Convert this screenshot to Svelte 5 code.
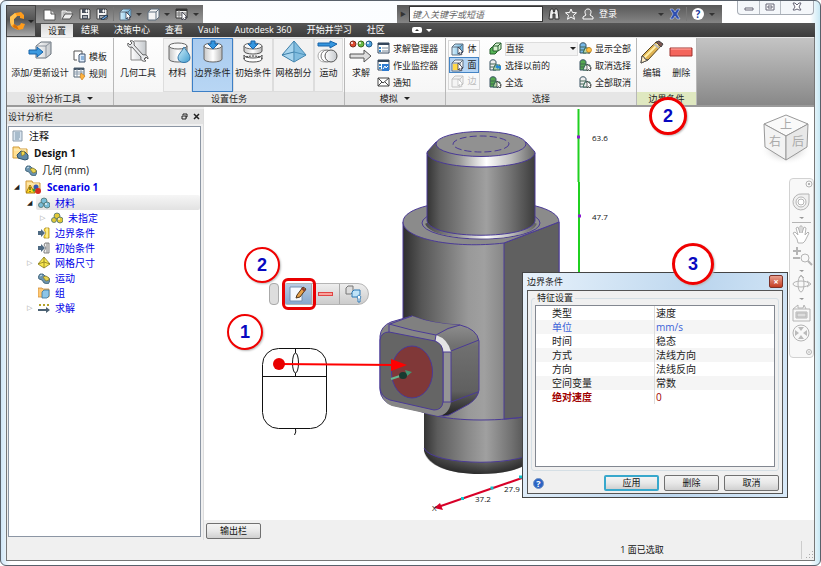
<script>
  const tabs = ['设置', '结果', '决策中心', '查看', 'Vault', 'Autodesk 360', '开始并学习', '社区'];
  let activeTab = $state('设置');

  const tasks = [
    { name: '材料', icon: 'material', width: 29 },
    { name: '边界条件', icon: 'boundary', width: 41 },
    { name: '初始条件', icon: 'initial', width: 40 },
    { name: '网格剖分', icon: 'mesh', width: 41 },
    { name: '运动', icon: 'motion', width: 29 },
  ];
  let activeTask = $state('边界条件');

  const modes = [
    { name: '体', icon: 'cube' },
    { name: '面', icon: 'face' },
    { name: '边', icon: 'edge', disabled: true },
  ];

  const tree = [
    { label: '注释', icon: 'note', level: 0, cls: 'top plain' },
    { label: 'Design 1', icon: 'design', level: 0, cls: 'top plain bold', big: true },
    { label: '几何 (mm)', icon: 'part', level: 1, cls: 'top plain' },
    { label: 'Scenario 1', icon: 'scenario', level: 1, cls: 'top bold', big: true, arrow: 'open' },
    { label: '材料', icon: 'balls', level: 2, arrow: 'open', cls: 'selected' },
    { label: '未指定', icon: 'ballsYellow', level: 3, arrow: 'closed' },
    { label: '边界条件', icon: 'bc', level: 2 },
    { label: '初始条件', icon: 'ic', level: 2 },
    { label: '网格尺寸', icon: 'meshSize', level: 2, arrow: 'closed' },
    { label: '运动', icon: 'part', level: 2 },
    { label: '组', icon: 'group', level: 2 },
    { label: '求解', icon: 'solveSmall', level: 2, arrow: 'closed' },
  ];

  const props = [
    { key: '类型', value: '速度' },
    { key: '单位', value: 'mm/s', cls: 'unit' },
    { key: '时间', value: '稳态' },
    { key: '方式', value: '法线方向' },
    { key: '方向', value: '法线反向' },
    { key: '空间变量', value: '常数' },
    { key: '绝对速度', value: '0', cls: 'required' },
  ];
</script>

{#snippet icon(name, w, h)}
  <svg class="icon" width={w} height={h} viewBox="0 0 {w} {h}" aria-hidden="true">
    {#if name === 'new'}
      <path d="M1 2h7l4 4v6H1z" fill="#fff" stroke="#555" /><path d="M8 2v4h4" fill="#ddd" stroke="#555" />
    {:else if name === 'open'}
      <path d="M1 11V3h4l1 1h4v2" fill="#bbb" stroke="#eee" /><path d="M1 11l3-5h8l-3 5z" fill="#eee" stroke="#555" />
    {:else if name === 'save' || name === 'saveAs'}
      <path d="M1 1h9l1 1v9H1z" fill="#f4f4f4" stroke="#444" /><path d="M3 1h6v4H3zM3 7h6v4H3z" fill="#48505c" /><path d="M7 2h1v2H7zM4 9h4" fill="#fff" stroke="#fff" />
      {#if name === 'saveAs'}<path d="M5 11l5-4 2 1-5 4z" fill="#6aa3e0" stroke="#234" />{/if}
    {:else if name === 'cube' || name === 'face' || name === 'box' || name === 'edge'}
      <path d="M1 4l3-3h8v8l-3 3H1z" fill={name === 'cube' ? 'url(#blueFill)' : '#f4f4f4'} stroke={name === 'edge' ? '#c4c4c4' : '#607080'} />
      <path d="M1 4h8v8M9 4l3-3" fill="none" stroke={name === 'edge' ? '#c4c4c4' : '#607080'} />
      {#if name === 'face'}<path d="M2 5h6v6H2z" fill="#ffd84a" />{/if}
      {#if name !== 'box'}<path d="M7 4v7l1.500-1.500 1 2.500 1.500-.5-1-2.500h2z" fill="#fff" stroke={name === 'edge' ? '#bbb' : '#223'} stroke-width=".7" />{/if}
    {:else if name === 'table'}
      <path d="M1 1h11v9H1z" fill="#eee" stroke="#333" /><path d="M1 2h11" stroke="#333" stroke-width="2" /><path d="M1 5h11M1 7h11M4 2v8" stroke="#777" /><path d="M7 4v8l1.500-1.500L10 12l1-1-1-2h2z" fill="#fff" stroke="#223" stroke-width=".7" />
    {:else if name === 'binoculars'}
      <path d="M2 3l1-2h2l.5 3h1L7 1h2l1 2 1 8H7V6H5v5H1z" fill="#eee" stroke="#333" />
    {:else if name === 'star'}
      <path d="M6 1l1.500 3.500 4 .3-3 2.500 1 4L6 9l-3.500 2.300 1-4-3-2.500 4-.3z" fill="#777" stroke="#fff" />
    {:else if name === 'user'}
      <path d="M4 7C2 4 3 1 6 1s4 3 2 6l3 2v2H1V9z" fill="#777" stroke="#fff" />
    {:else if name === 'exchange'}
      <path d="M1 1h3l2 3 2-3h3L8 6l3 5H8L6 8l-2 3H1l3-5z" fill="#2f4fb0" stroke="#dfe8ff" stroke-width=".5" />
    {:else if name === 'add'}
      <path d="M8 6l5-4h10v12l-5 4H8z" fill="url(#greyFill)" stroke="#69727c" /><path d="M8 6h10v12M18 6l5-4" fill="none" stroke="#8a929c" /><path d="M1 10h8V7l6 5-6 5v-3H1z" fill="#3c9ae0" stroke="#1763a8" />
    {:else if name === 'template'}
      <path d="M4 10H1V1h8v3" fill="#fff" stroke="#555" /><path d="M7 4h5v8H6V5z" fill="#dceafa" stroke="#3d516b" /><path d="M8 7h3M8 9h3" stroke="#3d7fc0" />
    {:else if name === 'rules'}
      <path d="M1 1h10v9H1z" fill="#fff" stroke="#567" /><path d="M1 2h10" stroke="#456" stroke-width="2" /><path d="M1 5h10M1 7h10M4 2v8M8 2v8" stroke="#89a" /><path d="M8 6l4 3-3 4-2-3z" fill="#ffb340" stroke="#c77814" stroke-width=".6" />
    {:else if name === 'tools'}
      <path d="M5 4l3-3h12v17l-3 2H5z" fill="url(#greyFill)" stroke="#888" /><path d="M2 3l2 2 2-2-2-2c3-1 5 1 4 4l9 10c3-1 5 1 5 4l-2-2-2 2 2 2c-3 1-6-1-5-4L6 7C3 8 1 6 2 3z" fill="#e8eaec" stroke="#555" stroke-width=".9" />
    {:else if name === 'material' || name === 'boundary' || name === 'initial'}
      {#if name === 'initial'}
        <path d="M4 6v5c0 4 18 4 18 0V6" fill="url(#cylinder)" stroke="#555" /><path d="M4 15c0 4 18 4 18 0v4c0 4-18 4-18 0z" fill="#fff" stroke="#555" /><path d="M4 19c0-4 18-4 18 0" fill="none" stroke="#333" stroke-dasharray="2 1" />
      {:else}
        <path d="M4 6v13c0 4 18 4 18 0V6" fill="url(#cylinder)" stroke="#666" />
      {/if}
      <ellipse cx="13" cy="6" rx="9" ry="3" fill="#f8f8f8" stroke="#666" />
      {#if name === 'material'}
        <path d="M19 7c3 5 6 7 6 11 0 6-12 6-12 0 0-4 4-6 6-11z" fill="url(#drop)" stroke="#3476a6" />
      {:else}
        <path d="M11 1h4v3h3l-5 5-5-5h3z" fill="#3596df" stroke="#1763a8" />
      {/if}
    {:else if name === 'mesh'}
      <path d="M13 1L1 15l12 7 12-7z" fill="#a9d5ee" stroke="#3e7fa8" /><path d="M13 1v21M1 15l12-3 12 3" fill="none" stroke="#3e7fa8" /><path d="M13 1v21l12-7z" fill="#5ba5cf" opacity=".5" />
    {:else if name === 'motion'}
      <path d="M2 3h12V1l7 3-7 4V6H2z" fill="#3596df" stroke="#1763a8" /><circle cx="8" cy="16" r="6" fill="#fff" stroke="#aaa" /><circle cx="11" cy="16" r="6" fill="#fff" stroke="#777" /><circle cx="15" cy="16" r="6" fill="url(#greyFill)" stroke="#555" />
    {:else if name === 'solve'}
      <circle cx="4" cy="4" r="3" fill="#e04a30" stroke="#753020" /><circle cx="12" cy="4" r="3" fill="#67ba47" stroke="#3d6a20" /><circle cx="20" cy="4" r="3" fill="#4a9edc" stroke="#245c88" /><circle cx="3" cy="3" r="1" fill="#fff" /><circle cx="11" cy="3" r="1" fill="#fff" /><circle cx="19" cy="3" r="1" fill="#fff" /><path d="M1 14h14v-4l7 6-7 6v-4H1z" fill="#ddd" stroke="#555" />
    {:else if name === 'manager' || name === 'monitor'}
      <path d="M1 1h11v10H1z" fill="#fff" stroke="#35475c" /><path d="M1 2h11" stroke="#35475c" stroke-width="2" /><path d="M2 5h2v2H2zM2 8h2v2H2z" fill="#3787c8" /><path d="M5 6h6M5 9h6" stroke="#789" />
      {#if name === 'monitor'}<path d="M5 5h7v7H5z" fill="#2e7bd0" /><path d="M6 10l2-3 1 2 2-2" fill="none" stroke="#fff" />{/if}
    {:else if name === 'mail'}
      <path d="M1 2h11v8H1z" fill="#fff" stroke="#444" /><path d="M1 2l5 5 6-5M1 10l4-4M12 10L8 6" fill="none" stroke="#444" />
    {:else if name === 'direct'}
      <path d="M1 7l2-2h5v5l-2 2H1z" fill="#55b455" stroke="#245d2b" /><path d="M4 4l3-3h5v6l-3 2H4z" fill="#d9f2d2" stroke="#245d2b" /><path d="M4 4h5v5M9 4l3-3" fill="none" stroke="#245d2b" />
    {:else if name === 'previous' || name === 'all' || name === 'invert' || name === 'showAll' || name === 'none'}
      <path d="M1 3c0-3 6-3 6 0v8H1z" fill={name === 'showAll' ? '#76b8e8' : name === 'all' || name === 'invert' ? '#53a84f' : '#eee'} stroke="#3a5564" /><path d="M1 5h6M1 8h6" stroke="#465" fill="none" /><path d="M6 6h5v5H4z" fill={name === 'none' || name === 'invert' ? '#eee' : '#b9d6a6'} stroke="#365" />
      {#if name === 'previous'}<path d="M12 11V7H9V5L6 8l3 2V9z" fill="#278ad5" />{/if}
      {#if name === 'showAll'}<circle cx="10" cy="8" r="2.500" fill="#ffc240" stroke="#b77715" stroke-width=".7" /><path d="M9 11h2" stroke="#666" />{/if}
      {#if name === 'all' || name === 'invert' || name === 'none'}<path d="M8 5v7l1.500-1.500L11 12l1-1-1-2h1.500z" fill="#fff" stroke="#222" stroke-width=".7" />{/if}
    {:else if name === 'pencil'}
      <path d="M2 16L16 2l5 4L8 20l-7 3z" fill="#dfb252" stroke="#54431f" /><path d="M4 18L18 4" stroke="#fff0a8" stroke-width="2" /><path d="M16 2l3-1 4 3-2 3z" fill="#7e5752" stroke="#444" /><path d="M14 4l5 4" stroke="#bbb" stroke-width="2" /><path d="M2 16l2 1 1 2 3 1-7 3z" fill="#ffedc6" stroke="#555" />
    {:else if name === 'minus'}
      <path d="M1 8h22v8H1z" fill="#f4655c" stroke="#9e332f" /><path d="M2 9h20" stroke="#ffb0a6" />
    {:else if name === 'note'}
      <path d="M1 1h9v10H1z" fill="#d8e4ef" stroke="#8b9baa" /><path d="M3 3h5M3 5h5M3 7h5M3 9h4" stroke="#7994a9" />
    {:else if name === 'design' || name === 'scenario'}
      <path d="M1 13V2h6l1 2h7v9z" fill="#ffdf91" stroke="#d19b3b" /><path d="M2 5h12" stroke="#fff0c0" />
      {#if name === 'design'}
        <path d="M5 10l4-4 4 1 3 3v4l-3 1-7-2z" fill="#6189a5" stroke="#2d536f" /><path d="M9 7l3-1 1 3-3 2z" fill="#f0d74d" stroke="#8b7622" stroke-width=".6" />
      {:else}
        <path d="M5 6l5 8H1z" fill="#ffda22" stroke="#a77a0b" /><path d="M5 8v3M5 12v1" stroke="#222" /><circle cx="11" cy="8" r="2.500" fill="#3858b0" /><circle cx="13" cy="12" r="3" fill="#d72c20" /><circle cx="9" cy="11" r="1.500" fill="#369b3a" />
      {/if}
    {:else if name === 'part'}
      <path d="M0 5l2-3 3 0 2 2 4 2 1 3-2 3-4-1-2-3-3-1z" fill="#6c93ad" stroke="#365a72" stroke-width=".8" /><path d="M5 5l3-1 3 2 0 2-3 1z" fill="#e8d452" stroke="#887a25" stroke-width=".7" /><path d="M2 4l2-1" stroke="#cfe4f0" />
    {:else if name === 'balls' || name === 'ballsYellow'}
      {@const fill = name === 'balls' ? '#79bdd8' : '#e2c936'}
      <circle cx="6" cy="4" r="3" {fill} stroke="#4e716f" stroke-width=".8" /><circle cx="3" cy="8" r="2.500" {fill} stroke="#4e716f" stroke-width=".8" /><circle cx="9" cy="8" r="3" {fill} stroke="#4e716f" stroke-width=".8" /><circle cx="8" cy="7" r="1" fill="#fff" opacity=".8" />
    {:else if name === 'bc' || name === 'ic'}
      <path d="M0 4h3V2l4 4-4 4V8H0z" fill="#4e6a83" /><path d="M7 1h4v10H6V9l2-3-2-3z" fill={name === 'bc' ? '#ffe24d' : '#eee'} stroke={name === 'bc' ? '#a88818' : '#666'} stroke-width=".8" /><path d="M9 1v10" stroke={name === 'bc' ? '#fff8c0' : '#888'} />
    {:else if name === 'meshSize'}
      <path d="M6 0l6 7-6 4-6-4z" fill="#f8e74f" stroke="#8a7c20" stroke-width=".8" /><path d="M6 0v11M0 7l6-2 6 2" fill="none" stroke="#8a7c20" stroke-width=".8" />
    {:else if name === 'group'}
      <path d="M0 10V1h4l1 1h6v8z" fill="#ffc873" stroke="#d1913d" stroke-width=".8" /><path d="M4 5l2-2h5v6l-2 2H4z" fill="#8cc5e8" stroke="#36729b" stroke-width=".8" />
    {:else if name === 'solveSmall'}
      <path d="M1 3h2M5 3h2M9 3h2" stroke="#b3a22b" stroke-width="2" /><path d="M0 7h8V5l4 3-4 3V9H0z" fill="#4c6273" />
    {:else if name === 'pageEdit'}
      <path d="M1 2h12v14H1z" fill="#f6faff" stroke="#7690b0" /><path d="M8 10l6-8 3 2-6 8-4 1z" fill="#e6a14a" stroke="#51371c" /><path d="M13 3l3 3" stroke="#8c3b2b" stroke-width="2" />
    {:else if name === 'bulb'}
      <path d="M1 3l2-2h5v6l-2 2H1z" fill="#ddd" stroke="#777" /><path d="M7 7l2-2h6v5l-2 2H7z" fill="#bfe3f8" stroke="#2c78b5" /><path d="M13 14c-3-5 5-5 2 0v3h-2z" fill="#fff" stroke="#2c78b5" />
    {/if}
  </svg>
{/snippet}

{#snippet caret()}<i class="caret"></i>{/snippet}

<svg class="defs" width="0" height="0" aria-hidden="true">
  <defs>
    <linearGradient id="greyFill"><stop offset="0" stop-color="#fff" /><stop offset="1" stop-color="#c4c8cc" /></linearGradient>
    <linearGradient id="blueFill"><stop offset="0" stop-color="#d8f0fc" /><stop offset="1" stop-color="#66b2e0" /></linearGradient>
    <linearGradient id="cylinder"><stop offset="0" stop-color="#c8c8c8" /><stop offset=".5" stop-color="#fff" /><stop offset="1" stop-color="#b8b8b8" /></linearGradient>
    <linearGradient id="drop" x2="1" y2="1"><stop offset="0" stop-color="#d4f1fb" /><stop offset="1" stop-color="#409dcf" /></linearGradient>
    <linearGradient id="steel"><stop offset="0" stop-color="#343434" /><stop offset=".12" stop-color="#5c5c5c" /><stop offset=".38" stop-color="#888" /><stop offset=".55" stop-color="#a0a0a0" /><stop offset=".78" stop-color="#707070" /><stop offset="1" stop-color="#3c3c3c" /></linearGradient>
    <linearGradient id="body"><stop offset="0" stop-color="#2e2e2e" /><stop offset=".12" stop-color="#565656" /><stop offset=".42" stop-color="#999" /><stop offset=".52" stop-color="#a0a0a0" /><stop offset=".68" stop-color="#808080" /><stop offset="1" stop-color="#606060" /></linearGradient>
    <linearGradient id="chamfer"><stop offset="0" stop-color="#4c4c4c" /><stop offset=".3" stop-color="#999" /><stop offset=".55" stop-color="#fff" /><stop offset=".78" stop-color="#bbb" /><stop offset="1" stop-color="#666" /></linearGradient>
    <linearGradient id="blockSide" x2="0" y2="1"><stop offset="0" stop-color="#9a9a9a" /><stop offset=".3" stop-color="#707070" /><stop offset=".75" stop-color="#606060" /><stop offset="1" stop-color="#222" /></linearGradient>
    <linearGradient id="base" x2="0" y2="1"><stop offset="0" stop-color="#000" stop-opacity="0" /><stop offset="1" stop-color="#000" stop-opacity=".7" /></linearGradient>
    <radialGradient id="cubeShadow"><stop offset="0" stop-color="#888" /><stop offset="1" stop-color="#fff" stop-opacity="0" /></radialGradient>
  </defs>
</svg>

<div class="window">
  <header>
    <button class="app-button" aria-label="应用程序菜单">
      <svg width="17" height="20" viewBox="0 0 17 20" aria-hidden="true">
        <path d="M6 2l6-1 3 3v4l-4-1V5L8 5 5 8v5l3 2 3-1 1-2 4 1-2 5-5 1-6-3-2-5V6z" fill="#ff9c1b" /><path d="M1 6l4 2v5l-3 2-1-5zM6 2l2 3-3 3-4-2z" fill="#ffc252" /><path d="M8 15l2 4-6-3 1-3z" fill="#d56e08" />
      </svg>
      {@render caret()}
    </button>
    <div class="title">
      <div class="quick">
        <button aria-label="新建">{@render icon('new', 13, 13)}</button>
        <button aria-label="打开">{@render icon('open', 13, 13)}</button>
        <button aria-label="保存">{@render icon('save', 12, 12)}</button>
        <button aria-label="另存为">{@render icon('saveAs', 12, 12)}</button>
        <i class="divider"></i>
        <button aria-label="选择">{@render icon('cube', 13, 13)}{@render caret()}</button>
        <button aria-label="显示">{@render icon('box', 13, 13)}{@render caret()}</button>
        <button aria-label="表格">{@render icon('table', 13, 13)}</button>
        {@render caret()}
      </div>
      <div class="search">
        <span class="expand">▶</span>
        <input aria-label="搜索" placeholder="键入关键字或短语" />
        <button aria-label="查找">{@render icon('binoculars', 12, 12)}</button>
        <button aria-label="收藏">{@render icon('star', 12, 12)}</button>
        <button class="login">{@render icon('user', 12, 12)} 登录 {@render caret()}</button>
        <button aria-label="Exchange">{@render icon('exchange', 12, 12)}</button>
        <i class="divider"></i>
        <button class="help" aria-label="帮助"><b>?</b>{@render caret()}</button>
      </div>
      <div class="window-buttons">
        <button aria-label="最小化"><svg width="10" height="10" viewBox="0 0 10 10"><path d="M1 6h8v2H1z" fill="#fff" stroke="#667" /></svg></button>
        <button aria-label="还原"><svg width="10" height="10" viewBox="0 0 10 10"><path d="M1 2h8v6H1z" fill="#fff" stroke="#667" /><path d="M3 4h4v2H3z" fill="none" stroke="#667" /></svg></button>
        <button aria-label="关闭"><svg width="10" height="10" viewBox="0 0 10 10"><path d="M1 1h2l2 2 2-2h2L7 5l2 3H7L5 7 3 8H1l2-3z" fill="#fff" stroke="#667" /></svg></button>
      </div>
    </div>
    <nav class="tabs">
      {#each tabs as tab}
        <button class:active={tab === activeTab} onclick={() => (activeTab = tab)}>{tab}</button>
      {/each}
      <button class="minimise" aria-label="最小化功能区">
        <svg width="10" height="6" viewBox="0 0 10 6"><rect width="10" height="6" rx="2" fill="#fff" /><path d="M3 4l2-2 2 2z" fill="#333" /></svg>
        {@render caret()}
      </button>
    </nav>
  </header>

  <div class="client">
    <div class="ribbon">
      <section class="panel design">
        <div class="panel-body">
          <button class="big">{@render icon('add', 24, 24)}<span>添加/更新设计</span></button>
          <div class="rows two">
            <button>{@render icon('template', 13, 13)}模板</button>
            <button>{@render icon('rules', 13, 13)}规则</button>
          </div>
        </div>
        <h2>设计分析工具 {@render caret()}</h2>
      </section>
      <section class="panel setup">
        <div class="panel-body">
          <button class="big geometry">{@render icon('tools', 24, 24)}<span>几何工具</span></button>
          {#each tasks as task}
            <button
              class="big task"
              class:on={task.name === activeTask}
              style="width: {task.width}px"
              onclick={() => (activeTask = task.name)}
            >
              {@render icon(task.icon, 26, 24)}<span>{task.name}</span>
            </button>
          {/each}
        </div>
        <h2>设置任务</h2>
      </section>
      <section class="panel simulate">
        <div class="panel-body">
          <button class="big">{@render icon('solve', 24, 24)}<span>求解</span></button>
          <div class="rows">
            <button>{@render icon('manager', 13, 13)}求解管理器</button>
            <button>{@render icon('monitor', 13, 13)}作业监控器</button>
            <button>{@render icon('mail', 13, 13)}通知</button>
          </div>
        </div>
        <h2>模拟 {@render caret()}</h2>
      </section>
      <section class="panel select">
        <div class="panel-body">
          <div class="modes">
            {#each modes as mode}
              <button class:on={mode.name === '面'} disabled={mode.disabled}>{@render icon(mode.icon, 13, 13)}{mode.name}</button>
            {/each}
          </div>
          <div class="rows wide">
            <label>
              {@render icon('direct', 13, 13)}
              <select aria-label="选择方式"><option>直接</option></select>
              {@render caret()}
            </label>
            <button>{@render icon('previous', 13, 13)}选择以前的</button>
            <button>{@render icon('all', 13, 13)}全选</button>
          </div>
          <div class="rows">
            <button>{@render icon('showAll', 13, 13)}显示全部</button>
            <button>{@render icon('invert', 13, 13)}取消选择</button>
            <button>{@render icon('none', 13, 13)}全部取消</button>
          </div>
        </div>
        <h2>选择</h2>
      </section>
      <section class="panel context">
        <div class="panel-body">
          <button class="big">{@render icon('pencil', 24, 24)}<span>编辑</span></button>
          <button class="big">{@render icon('minus', 24, 24)}<span>删除</span></button>
        </div>
        <h2>边界条件</h2>
      </section>
      <div class="filler"></div>
    </div>

    <main>
      <aside>
        <div class="side-title">
          <span>设计分析栏</span>
          <button aria-label="浮动"><svg width="7" height="7" viewBox="0 0 7 7"><path d="M2 2V1h4v3H5M1 3h4v3H1z" fill="none" stroke="#222" /></svg></button>
          <button aria-label="关闭"><svg width="7" height="7" viewBox="0 0 7 7"><path d="M1 1l5 5M6 1L1 6" stroke="#222" stroke-width="1.500" /></svg></button>
        </div>
        <ul class="tree">
          {#each tree as node}
            <li class="level-{node.level} {node.cls ?? ''}">
              <span class="arrow {node.arrow ?? ''}"></span>
              <span class="node">{@render icon(node.icon, node.big ? 17 : 12, node.big ? 16 : 12)}{node.label}</span>
            </li>
          {/each}
        </ul>
      </aside>

      <div class="work">
        <div class="canvas">
          <svg class="scene" width="610" height="413" viewBox="204 107 610 413" role="img" aria-label="阀体模型">
            <path d="M578.500 109v73M579 182v100" stroke="#20d020" stroke-width="2" />
            <path d="M577 135.500h3v3h-3zM578 214.500h3v3h-3z" fill="#8a18d0" />
            <text x="592" y="141">63.6</text>
            <text x="592" y="220">47.7</text>

            <g stroke="#4a3a96" stroke-width="1">
              <path d="M424 404v47c4 14 25 23 56 23s55-9 57-23v-47z" fill="url(#steel)" stroke="none" />
              <path d="M424 448c8 19 106 19 113 0v4c-4 14-25 22-57 22s-53-9-56-22z" fill="url(#base)" stroke="none" />
              <path d="M424 448c8 19 106 19 113 0" fill="none" />
              <path d="M403 222v175c6 16 40 23 78 23s66-6 78-14V222z" fill="url(#body)" />
              <path d="M504 243l55-21v187q-25 8-55 10z" fill="#606060" />
              <path d="M504 243c-50 6-101-4-101-21 0-29 156-29 156 0z" fill="#8b8b8b" />
              <ellipse cx="481" cy="223" rx="59" ry="16" fill="#8f8f8f" />
              <path d="M427 223c6 18 102 18 108 0" fill="none" stroke="url(#chamfer)" stroke-width="4" />
              <path d="M427 153v68c4 19 104 19 108 0v-68z" fill="url(#steel)" />
              <path d="M436 142l-9 10c0 20 108 20 108 0l-9-10z" fill="url(#chamfer)" />
              <ellipse cx="481" cy="144" rx="45" ry="12.500" fill="#919191" />
              <ellipse cx="481" cy="144" rx="28" ry="8" fill="none" stroke-dasharray="7 3" />
            </g>

            <g stroke="#4a3a96">
              <path d="M380 336q1-10 11-14l21-6q20 8 48 9 17 4 19 16v49q-1 8-10 14l-20 11q-5 2-11 0l-46-10q-11-4-12-15z" fill="url(#blockSide)" />
              <path d="M389 324l23-8q20 8 48 9l-24 10z" fill="#808080" stroke="none" />
              <path d="M381 336q1-9 10-12l45 11q13 4 15 17v50q-2 13-13 14l-46-10q-10-4-11-15z" fill="#868686" stroke="none" />
              <path d="M436 335q12 4 15 17h-8q-1-9-8-11z" fill="#e4e4e4" stroke="none" />
              <path d="M443 352h8v50h-8z" fill="#959595" />
              <path d="M380 340q1-8 9-8l46 9q8 3 8 12v49q-1 8-9 8l-44-10q-9-3-10-12z" fill="#656565" />
              <path d="M389 324q24 7 47 11M389 324v8M436 335l-1 6M451 351l28-11M451 402l27-10M436 335q12-8 24-10M390 324l22-8" fill="none" />
              <ellipse cx="412" cy="372" rx="20.500" ry="26" fill="#803838" />
            </g>
            <path d="M391 379l18-6" stroke="#68b890" stroke-width="2" /><path d="M405 370l7 2-5 4z" fill="#459370" /><ellipse cx="403" cy="375.500" rx="4" ry="3.500" fill="#173b30" />

            <path d="M438 507l84-29" stroke="#d80028" stroke-width="2" />
            <path d="M434 508l6-5 3 7z" fill="#d80028" />
            <path d="M519 475.500h3v3h-3zM490.500 486.500h3v3h-3zM461 497h3v3h-3z" fill="#10c4cc" />
            <text x="432" y="511">X</text>
            <text x="475" y="502">37.2</text>
            <text x="504" y="492">27.9</text>

            <rect x="262.500" y="348.500" width="64" height="80" rx="16" fill="#fff" stroke="#111" />
            <path d="M262 376.500h65M295.500 348v6M295.500 372v4M295.500 429q1 3-1 6" fill="none" stroke="#111" />
            <ellipse cx="295.500" cy="363" rx="3" ry="10" fill="#fff" stroke="#111" />
            <path d="M279 364l116 1" stroke="#f00" stroke-width="2" /><circle cx="279" cy="364" r="6" fill="#e80000" /><path d="M391 359l16 6-16 6z" fill="#f00" />

            <ellipse cx="786" cy="149" rx="26" ry="16" fill="url(#cubeShadow)" />
            <g stroke="#999" stroke-width="1" stroke-linejoin="round">
              <path d="M786 115l22 9-22 12-22-12z" fill="#fafafa" /><path d="M764 124l22 12v24l-21-13z" fill="#f3f3f3" /><path d="M808 124l-22 12v24l21-13z" fill="#e8e8e8" />
            </g>
            <g class="cube-text"><text x="780" y="129">上</text><text x="769" y="146">右</text><text x="792" y="146">后</text></g>
          </svg>

          <div class="mini">
            <span class="grip"></span>
            <div class="mini-bar">
              <button class="on" aria-label="编辑">{@render icon('pageEdit', 18, 18)}</button>
              <button aria-label="删除"><span class="dash"></span></button>
              <button aria-label="可见性">{@render icon('bulb', 18, 18)}</button>
            </div>
            <span class="highlight"></span>
          </div>

          <div class="nav-bar">
            <svg width="23" height="178" viewBox="1 0 23 178" fill="none" stroke="#b4b4b4" role="img" aria-label="导航栏">
              <circle cx="20" cy="5" r="3" /><path d="M19 4l2 2M21 4l-2 2" />
              <path d="M13 15h7v8a8 8 0 1 1-7-8z" fill="#f0f0f0" /><circle cx="12" cy="23" r="5" fill="#fff" /><circle cx="12" cy="23" r="3" />
              <path d="M10 38h5l-2 2z" fill="#999" stroke="none" /><path d="M3 43.500h19" />
              <path d="M8 60l-4-6 2-1 3 3-2-7 2-1 2 6V47h2v7l2-6 2 1-1 7 3-3 1 1-4 8-2 2H9z" fill="#fff" />
              <path d="M8 68v8M4 72h8M4 79h7" stroke-width="2" /><circle cx="16" cy="79" r="4" /><path d="M19 82l4 4" stroke-width="2" />
              <path d="M10 91h5l-2 2z" fill="#999" stroke="none" />
              <ellipse cx="12" cy="105" rx="3" ry="8" /><ellipse cx="12" cy="105" rx="8" ry="3" /><path d="M10 99l2-3 3 3M18 102l4 3-4 3" />
              <path d="M10 119h5l-2 2z" fill="#999" stroke="none" />
              <path d="M4 130h17v12H4zM7 133h11v6H7zM4 130l5-4v3h5l1-3 2 4" /><path d="M8 134h9v4H8z" fill="#ddd" />
              <circle cx="12" cy="154" r="8" /><path d="M12 152l-3-4h6zM12 156l-3 4h6zM10 154l-4-3v6zM14 154l4-3v6z" fill="#bbb" stroke="none" />
              <circle cx="20" cy="173" r="2.500" /><path d="M19 173h2" />
            </svg>
          </div>

          <div class="dialog" role="dialog" aria-label="边界条件">
            <div class="dialog-title"><span>边界条件</span><button aria-label="关闭">×</button></div>
            <div class="dialog-body">
              <fieldset>
                <legend>特征设置</legend>
                <div class="grid">
                  <table>
                    <tbody>
                      {#each props as prop}
                        <tr class={prop.cls}><th scope="row">{prop.key}</th><td>{prop.value}</td></tr>
                      {/each}
                    </tbody>
                  </table>
                </div>
              </fieldset>
              <div class="actions">
                <button class="dialog-help" aria-label="帮助">?</button>
                <button class="command primary">应用</button>
                <button class="command">删除</button>
                <button class="command">取消</button>
              </div>
            </div>
          </div>
        </div>
        <div class="output"><button class="command">输出栏</button></div>
      </div>
    </main>
    <footer>
      <span>1 面已选取</span>
      <i class="divider"></i>
      <svg width="8" height="8" viewBox="0 0 8 8" aria-hidden="true"><path d="M6 0h1v1H6zM3 3h1v1H3zM6 3h1v1H6zM0 6h1v1H0zM3 6h1v1H3zM6 6h1v1H6z" fill="#aaa" /></svg>
    </footer>
  </div>

  <span class="callout ribbon-step">2</span>
  <span class="callout edit-step">2</span>
  <span class="callout pick-step">1</span>
  <span class="callout dialog-step">3</span>
</div>

<style>
  :global(body) {
    background: #fff;
  }

  .window {
    position: relative;
    box-sizing: border-box;
    min-height: 100vh;
    display: flex;
    flex-direction: column;
    padding: 4px 5px;
    border: 1px solid #59616b;
    border-radius: 6px;
    background: linear-gradient(90deg, #cfe6f7, #fff 10px, #fbfdff 50%, #fff calc(100% - 10px), #c8e8f4);
    color: #222;
    font: 9px/12px "Open Sans", "Noto Sans CJK SC", sans-serif;
    overflow: hidden;
  }

  button, input, select {
    box-sizing: border-box;
    margin: 0;
    padding: 0;
    border: 0;
    background: none;
    color: inherit;
    font: inherit;
    white-space: nowrap;
  }

  button {
    display: flex;
    align-items: center;
    justify-content: center;
  }

  h2, ul { margin: 0; padding: 0; }
  .defs { position: absolute; }
  .icon { flex: none; }

  .caret {
    display: inline-block;
    flex: none;
    border: 3px solid transparent;
    border-top-color: currentColor;
    border-bottom: 0;
  }

  .divider { width: 1px; height: 14px; background: #777; }

  /* title bar */
  header {
    display: grid;
    grid-template: 18px 14px / 30px 1fr;
  }

  .app-button {
    grid-row: 1 / 3;
    gap: 2px;
    border: 1px solid #444;
    background: linear-gradient(#777, #555 45%, #aaa);
    color: #222;
  }

  .title {
    display: flex;
    align-items: flex-start;
  }

  .quick, .search {
    display: flex;
    align-items: center;
    height: 18px;
    background: linear-gradient(#6b6b6b, #989898);
    color: #333;
  }

  .quick {
    box-sizing: border-box;
    width: 167px;
    padding-left: 7px;
    gap: 5px;
  }

  .quick button { gap: 4px; }

  .search {
    width: 325px;
    margin-left: auto;
    gap: 5px;
    background: linear-gradient(#585858, #858585);
  }

  .expand { width: 6px; margin-left: 3px; font-size: 6px; }

  .search input {
    width: 134px;
    height: 16px;
    padding: 0 2px;
    margin-left: -2px;
    border: 1px solid #333;
    background: #fff;
    font-style: italic;
  }

  .search input::placeholder { color: #666; }
  .login { width: 82px; gap: 5px; color: #fff; justify-content: flex-start; }
  .login .caret { margin-left: auto; color: #333; }
  .help { gap: 5px; }

  .help b {
    width: 12px;
    border-radius: 6px;
    background: #fff;
    color: #1a3aa0;
    font-size: 10px;
  }

  .window-buttons {
    display: flex;
    height: 14px;
    margin: -5px 1px 0 15px;
    border: 1px solid #a6acb4;
    border-top: 0;
    border-radius: 0 0 4px 4px;
    background: #f4f7fa;
  }

  .window-buttons button { width: 21px; }
  .window-buttons button + button { border-left: 1px solid #b5bbc2; }
  .window-buttons button:last-child { width: 33px; }

  .tabs {
    display: flex;
    gap: 1px;
    padding: 0 5px;
    background: linear-gradient(#555, #3c3c3c);
    color: #fff;
  }

  .tabs button { padding: 0 7px; }

  .tabs .active {
    margin-top: 1px;
    background: linear-gradient(#d8d8d8, #f4f4f4);
    color: #222;
  }

  .tabs .minimise { gap: 4px; margin-left: 12px; }

  /* ribbon */
  .client {
    flex: 1;
    display: flex;
    flex-direction: column;
    border: 1px solid #777;
    border-top: 0;
    background: #f0f0f0;
  }

  .ribbon {
    display: flex;
    height: 67px;
    padding-top: 1px;
    border-bottom: 2px solid #9a9a9a;
    background: #e6e6e6;
  }

  .panel {
    flex: none;
    display: flex;
    flex-direction: column;
    border-right: 1px solid #b8b8b8;
    background: #fbfbfb;
  }

  .design { width: 106px; }
  .setup { width: 230px; }
  .simulate { width: 100px; }
  .select { width: 190px; }
  .context { width: 59px; }
  .filler { flex: 1; background: linear-gradient(#c4c4c4, #888); }

  .panel-body {
    flex: 1;
    display: flex;
    align-items: stretch;
    background: linear-gradient(#fefefe, #f6f6f6);
  }

  h2 {
    height: 13px;
    background: #e6e6e6;
    font-size: 9px;
    font-weight: 400;
    line-height: 13px;
    text-align: center;
  }

  h2 .caret { margin: 0 0 2px 4px; }
  .context h2 { background: #dfe8c0; }

  .big {
    flex-direction: column;
    justify-content: flex-start;
    gap: 3px;
    padding-top: 2px;
  }

  .design .big { width: 64px; }
  .design .big, .design .rows { padding-left: 2px; }
  .geometry { width: 44px; margin: 0 3px 0 2px; }
  .task { border: 1px solid #ddd; background: #f2f2f2; padding-top: 1px; }
  .task.on { border-color: #3c7fc6; background: linear-gradient(#a9cbef, #b8d6f4); }
  .simulate .big { width: 32px; }
  .context .big { flex: 1; }

  .rows {
    display: flex;
    flex-direction: column;
    padding-top: 2px;
  }

  .rows button, .rows label {
    display: flex;
    align-items: center;
    justify-content: flex-start;
    gap: 3px;
    height: 17px;
  }

  .rows.two { padding-top: 10px; }
  .rows.wide { width: 90px; padding-left: 9px; }
  .rows.wide label { position: relative; }

  .rows select {
    width: 73px;
    height: 14px;
    padding-left: 0;
    border: 1px solid #ddd;
    background: #f3f3f3;
    appearance: none;
  }

  .rows label .caret { position: absolute; right: 3px; }

  .modes {
    width: 30px;
    margin: 2px 0 2px 2px;
    border: 1px solid #d8d8d8;
  }

  .modes button { width: 100%; height: 16px; gap: 3px; }
  .modes .on { border: 1px solid #4484c4; background: #b4d4f4; }
  .modes button:disabled { color: #bbb; }

  /* side panel */
  main { flex: 1; display: flex; }

  aside {
    width: 196px;
    display: flex;
    flex-direction: column;
    margin-top: 2px;
    border-right: 1px solid #ddd;
  }

  .side-title {
    display: flex;
    align-items: center;
    gap: 5px;
    height: 15px;
    padding-right: 3px;
    background: #e2e2e2;
  }

  .side-title span { flex: 1; padding-left: 1px; }

  .tree {
    flex: 1;
    margin: 2px 2px 3px 1px;
    border: 1px solid #8c96a4;
    background: #fff;
    color: #0000e8;
    font-size: 10px;
    list-style: none;
  }

  .tree li { display: flex; align-items: center; height: 15px; white-space: nowrap; }
  .tree .top { height: 17px; }
  .tree .plain { color: #111; }
  .tree .bold { font-weight: 700; }
  .node { flex: 1; display: flex; align-items: center; gap: 5px; height: 100%; }
  .selected .node { margin-left: -2px; padding-left: 2px; border-radius: 2px; background: linear-gradient(#f6f6f6, #e2e2e2); }
  .level-0 .node { margin-left: -11px; }
  .level-0 { padding-left: 3px; }
  .level-1 { padding-left: 5px; }
  .level-2 { padding-left: 18px; }
  .level-3 { padding-left: 31px; }
  .arrow { box-sizing: border-box; width: 11px; flex: none; }
  .arrow.open::before, .arrow.closed::before { content: "▷"; display: block; color: #999; font: 7px/10px "DejaVu Sans", sans-serif; }
  .arrow.open::before { content: "◢"; color: #222; }

  /* work area */
  .work { flex: 1; min-width: 0; display: flex; flex-direction: column; }
  .canvas { position: relative; flex: 1; min-height: 412px; overflow: hidden; background: #fff; }
  .scene { display: block; }
  .scene text { fill: #111; font-size: 8px; }
  .scene .cube-text text { fill: #aaa; font-size: 12px; }

  .mini {
    position: absolute;
    left: 65px;
    top: 176px;
    display: flex;
    gap: 4px;
    height: 22px;
  }

  .grip { width: 8px; border: 1px solid #aaa; border-radius: 4px; background: #ddd; }
  .mini-bar { display: flex; border: 1px solid #b5b5b5; border-radius: 4px 11px 11px 4px; background: linear-gradient(#eee, #ccc); overflow: hidden; }
  .mini-bar button { width: 28px; border-right: 1px solid #aaa; }
  .mini-bar .on { background: linear-gradient(#b8cce2, #87a8ce); }
  .mini-bar button:last-child { border: 0; }
  .dash { width: 13px; height: 2px; border: 1px solid #e04444; background: #f9a39c; }

  .highlight {
    position: absolute;
    left: 13px;
    top: -5px;
    width: 28px;
    height: 26px;
    border: 3px solid #e80000;
    border-radius: 6px;
  }

  .nav-bar {
    position: absolute;
    right: 0;
    top: 71px;
    height: 178px;
    border: 1px solid #d2d2d2;
    border-radius: 4px;
    background: #f8f8f8;
  }

  .dialog {
    position: absolute;
    left: 318px;
    top: 165px;
    box-sizing: border-box;
    width: 266px;
    padding: 0 4px 3px;
    border: 1px solid #444;
    background: linear-gradient(100deg, #e8f2fb, #bcd6ee 60%, #d8e9f8);
  }

  .dialog-title { display: flex; align-items: center; height: 17px; }
  .dialog-title span { flex: 1; }
  .dialog-title button { width: 14px; height: 13px; border: 1px solid #7b3128; border-radius: 2px; background: linear-gradient(#e8a090, #c43c22); color: #fff; font-weight: 700; }
  .dialog-body { padding: 2px 3px; border: 1px solid #555; background: #f0f0f0; }
  fieldset { margin: 0; padding: 2px 3px 3px; border: 1px solid #d5dfe5; border-radius: 3px; }
  legend { padding: 0 2px; line-height: 10px; }
  .grid { height: 160px; border: 1px solid #828790; background: #fff; }
  table { width: 100%; border-collapse: collapse; font-size: 10px; table-layout: fixed; }
  tr { height: 14px; }
  tr:nth-child(even) { background: #f5f5f5; }
  th, td { padding: 0; line-height: 14px; text-align: left; font-weight: 400; }
  th { width: 102px; padding-left: 16px; border-right: 1px solid #ddd; }
  td { padding-left: 1px; }
  .unit { color: #3b62d8; }
  .required { color: #a00000; }
  .required th { font-weight: 700; }

  .actions { display: flex; gap: 5px; margin-top: 4px; }
  .dialog-help { width: 11px; height: 11px; margin: 3px auto 0 2px; border: 1px solid #7695c4; border-radius: 6px; background: #2b63c4; color: #fff; font-weight: 700; }

  .command {
    width: 55px;
    height: 16px;
    border: 1px solid #707070;
    border-radius: 2px;
    background: linear-gradient(#f4f4f4, #e8e8e8 50%, #d0d0d0);
    color: #111;
  }

  .command.primary { border: 2px solid #38a8cc; }
  .output { height: 20px; padding: 3px 2px 0; box-sizing: border-box; }

  footer {
    display: flex;
    align-items: center;
    height: 20px;
  }

  footer span { margin-left: 76%; color: #111; }
  footer .divider { height: 18px; margin: 0 4px 0 auto; background: #ccc; }
  footer svg { align-self: flex-end; margin-bottom: 1px; }

  .callout {
    position: absolute;
    box-sizing: border-box;
    width: 36px;
    height: 36px;
    border: 2px solid #f00000;
    border-radius: 50%;
    background: #fff;
    box-shadow: 1px 1px 2px #bbb;
    color: #0808c0;
    font: 700 18px/32px "Liberation Sans", sans-serif;
    text-align: center;
  }

  .ribbon-step { left: 648px; top: 96px; border-width: 3px; line-height: 32px; width: 38px; height: 38px; }
  .edit-step { left: 243px; top: 246px; }
  .pick-step { left: 226px; top: 313px; }
  .dialog-step { left: 671px; top: 242px; width: 42px; height: 42px; border-width: 3px; line-height: 36px; }
</style>
